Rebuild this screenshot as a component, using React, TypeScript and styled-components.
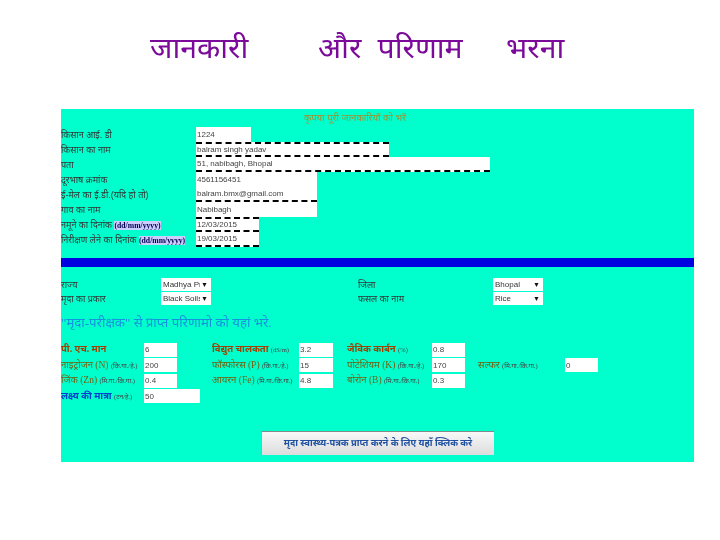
import { Fragment } from 'react';
import styled, { createGlobalStyle } from 'styled-components';

const GlobalStyle = createGlobalStyle`
  html, body {
    margin: 0;
    padding: 0;
    background: #fff;
    font-family: "Liberation Sans", "Noto Sans", "Noto Sans Devanagari", sans-serif;
  }
`;

const Page = styled.div`
  width: 720px;
  height: 540px;
  overflow: hidden;
  background: #fff;
`;

const Title = styled.h1`
  height: 109px;
  box-sizing: border-box;
  margin: 0;
  padding: 32px 0 0 150px;
  display: flex;
  font-family: "Liberation Serif", "Noto Sans Devanagari", serif;
  font-size: 28px;
  line-height: 34px;
  word-spacing: 8px;
  font-weight: 400;
  color: #7b0a9a;
`;

const TitleWord = styled.span<{ $w: number }>`
  width: ${(p) => p.$w}px;
  white-space: nowrap;
  transform: scaleX(1.08);
  transform-origin: left center;
`;

const Panel = styled.div`
  margin-left: 61px;
  width: 633px;
  height: 353px;
  background: #00ffcc;
  color: #333;
  font-size: 8px;
  filter: blur(0.3px);
`;

const PanelTitle = styled.div`
  height: 18px;
  line-height: 17px;
  padding-right: 45px;
  text-align: center;
  color: #a09030;
  font-size: 9.5px;
`;

const InfoGrid = styled.div`
  display: grid;
  grid-template-columns: 135px 1fr;
  grid-auto-rows: 15px;
  align-items: center;
  height: 131px;
`;

const InfoLabel = styled.div`
  white-space: nowrap;
  font-size: 9px;
`;

const DateHint = styled.span`
  background: #ccccff;
  font-family: "Liberation Serif", serif;
  font-size: 7.7px;
  font-weight: 700;
  color: #000050;
`;

const InfoInput = styled.input<{ $w: number; $top?: boolean; $bottom?: boolean }>`
  display: block;
  width: ${(p) => p.$w}px;
  height: 15px;
  box-sizing: border-box;
  padding: 0 1px;
  margin: 0;
  background: #fff;
  font: 8px "Liberation Sans", sans-serif;
  color: #444;
  outline: none;
  border: 0;
  border-top: ${(p) => (p.$top ? '2px dashed #000' : '0')};
  border-bottom: ${(p) => (p.$bottom ? '2px dashed #000' : '0')};
`;

const BlueBar = styled.div`
  height: 9px;
  background: #0000e0;
`;

const SelectArea = styled.div`
  display: grid;
  grid-template-columns: 100px 197px 135px 1fr;
  grid-auto-rows: 14px;
  align-items: center;
  padding-top: 10px;
  height: 28px;
`;

const SelectWrap = styled.div`
  position: relative;
  width: 50px;
  height: 13px;
`;

const SmallSelect = styled.select`
  display: block;
  width: 50px;
  height: 13px;
  border: 0;
  padding: 0 11px 0 2px;
  appearance: none;
  background: #fff;
  font: 8px "Liberation Sans", sans-serif;
  color: #333;
  outline: none;
`;

const SelectArrow = styled.span`
  position: absolute;
  right: 3px;
  top: 3px;
  font-size: 7px;
  line-height: 7px;
  color: #111;
  pointer-events: none;
`;

const Heading = styled.div`
  height: 37px;
  box-sizing: border-box;
  padding-top: 9px;
  font-family: "Liberation Serif", "Noto Sans Devanagari", serif;
  font-size: 13.2px;
  line-height: 18px;
  color: #1890e0;
`;

const ResultRow = styled.div`
  display: flex;
  align-items: center;
  height: 15.5px;
`;

const ResultLabel = styled.div<{ $w: number; $ml?: number; $tone?: string; $bold?: boolean }>`
  width: ${(p) => p.$w}px;
  margin-left: ${(p) => p.$ml ?? 0}px;
  flex: none;
  white-space: nowrap;
  font-family: "Liberation Serif", "Noto Sans Devanagari", serif;
  font-size: 9.5px;
  font-weight: ${(p) => (p.$bold ? 700 : 400)};
  color: ${(p) => p.$tone ?? '#706010'};
`;

const Unit = styled.span`
  font-size: 6.5px;
  font-weight: 400;
  color: #444;
`;

const ResultInput = styled.input<{ $w?: number }>`
  width: ${(p) => p.$w ?? 33}px;
  height: 14px;
  flex: none;
  box-sizing: border-box;
  margin: 0;
  padding: 0 1px;
  border: 0;
  outline: none;
  background: #fff;
  font: 8px "Liberation Sans", sans-serif;
  color: #444;
`;

const ButtonRow = styled.div`
  display: flex;
  padding: 27px 0 0 200px;
`;

const SubmitButton = styled.button`
  width: 233px;
  height: 24px;
  padding: 0;
  border: 0;
  border-top: 1px solid #808a88;
  border-left: 1px solid #a0aaa8;
  background: linear-gradient(#f8f8f8, #dcdcdc);
  color: #2050a0;
  font-family: "Liberation Serif", "Noto Sans Devanagari", serif;
  font-size: 9.4px;
  font-weight: 700;
`;

const info = [
  { label: 'किसान आई. डी', value: '1224', w: 55 },
  { label: 'किसान का नाम', value: 'balram singh yadav', w: 193, top: true, bottom: true },
  { label: 'पता', value: '51, nabibagh, Bhopal', w: 294, bottom: true },
  { label: 'दूरभाष क्रमांक', value: '4561156451', w: 121 },
  { label: 'ई-मेल का ई.डी.(यदि हो तो)', value: 'balram.bmx@gmail.com', w: 121, bottom: true },
  { label: 'गाव का नाम', value: 'Nabibagh', w: 121 },
  { label: 'नमूने का दिनांक', hint: '(dd/mm/yyyy)', value: '12/03/2015', w: 63, top: true, bottom: true },
  { label: 'निरीक्षण लेने का दिनांक', hint: '(dd/mm/yyyy)', value: '19/03/2015', w: 63, bottom: true },
];

const Dropdown = ({ text }: { text: string }) => (
  <SelectWrap>
    <SmallSelect defaultValue={text}>
      <option value={text}>{text}</option>
    </SmallSelect>
    <SelectArrow>▼</SelectArrow>
  </SelectWrap>
);

const App = () => {
  return (
    <Page>
      <GlobalStyle />
      <Title>
        <TitleWord $w={168}>जानकारी</TitleWord>
        <TitleWord $w={188}>और परिणाम</TitleWord>
        <TitleWord $w={60}>भरना</TitleWord>
      </Title>
      <Panel>
        <PanelTitle>कृपया पूरी जानकारियों को भरें</PanelTitle>
        <InfoGrid>
          {info.map((row) => (
            <Fragment key={row.label}>
              <InfoLabel>
                {row.label} {row.hint && <DateHint>{row.hint}</DateHint>}
              </InfoLabel>
              <InfoInput readOnly value={row.value} $w={row.w} $top={row.top} $bottom={row.bottom} />
            </Fragment>
          ))}
        </InfoGrid>
        <BlueBar />
        <SelectArea>
          <InfoLabel>राज्य</InfoLabel>
          <Dropdown text="Madhya Pradesh" />
          <InfoLabel>जिला</InfoLabel>
          <Dropdown text="Bhopal" />
          <InfoLabel>मृदा का प्रकार</InfoLabel>
          <Dropdown text="Black Soils" />
          <InfoLabel>फसल का नाम</InfoLabel>
          <Dropdown text="Rice" />
        </SelectArea>
        <Heading>"मृदा-परीक्षक" से प्राप्त परिणामो को यहां भरे.</Heading>
        <ResultRow>
          <ResultLabel $w={83} $tone="#a04000" $bold>पी. एच. मान</ResultLabel>
          <ResultInput readOnly value="6" />
          <ResultLabel $w={87} $ml={35} $tone="#a04000" $bold>विद्युत चालकता <Unit>(dS/m)</Unit></ResultLabel>
          <ResultInput readOnly value="3.2" $w={34} />
          <ResultLabel $w={85} $ml={14} $tone="#a04000" $bold>जैविक कार्बन <Unit>(%)</Unit></ResultLabel>
          <ResultInput readOnly value="0.8" />
        </ResultRow>
        <ResultRow>
          <ResultLabel $w={83}>नाइट्रोजन (N) <Unit>(कि.गा./हे.)</Unit></ResultLabel>
          <ResultInput readOnly value="200" />
          <ResultLabel $w={87} $ml={35}>फॉस्फोरस (P) <Unit>(कि.गा./हे.)</Unit></ResultLabel>
          <ResultInput readOnly value="15" $w={34} />
          <ResultLabel $w={85} $ml={14}>पोटेशियम (K) <Unit>(कि.गा./हे.)</Unit></ResultLabel>
          <ResultInput readOnly value="170" />
          <ResultLabel $w={87} $ml={13}>सल्फर <Unit>(मि.गा./कि.गा.)</Unit></ResultLabel>
          <ResultInput readOnly value="0" />
        </ResultRow>
        <ResultRow>
          <ResultLabel $w={83}>जिंक (Zn) <Unit>(मि.गा./कि.गा.)</Unit></ResultLabel>
          <ResultInput readOnly value="0.4" />
          <ResultLabel $w={87} $ml={35}>आयरन (Fe) <Unit>(मि.गा./कि.गा.)</Unit></ResultLabel>
          <ResultInput readOnly value="4.8" $w={34} />
          <ResultLabel $w={85} $ml={14}>बोरोन (B) <Unit>(मि.गा./कि.गा.)</Unit></ResultLabel>
          <ResultInput readOnly value="0.3" />
        </ResultRow>
        <ResultRow>
          <ResultLabel $w={83} $tone="#0040d0" $bold>लक्ष्य की मात्रा <Unit>(टन/हे.)</Unit></ResultLabel>
          <ResultInput readOnly value="50" $w={56} />
        </ResultRow>
        <ButtonRow>
          <SubmitButton>मृदा स्वास्थ्य-पत्रक प्राप्त करने के लिए यहाँ क्लिक करे</SubmitButton>
        </ButtonRow>
      </Panel>
    </Page>
  );
};

export default App;
